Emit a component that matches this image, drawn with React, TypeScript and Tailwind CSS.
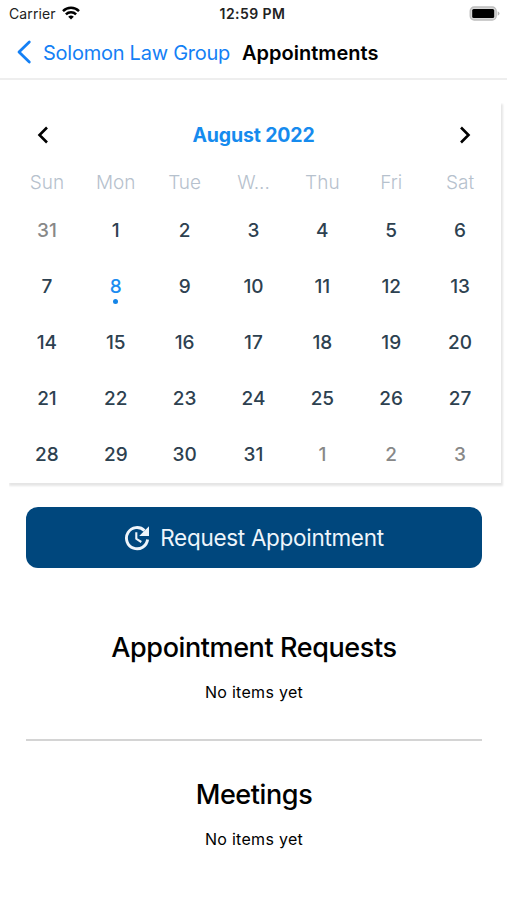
const DAY_NAMES = ["Sun", "Mon", "Tue", "W...", "Thu", "Fri", "Sat"];

const WEEKS = [
  [31, 1, 2, 3, 4, 5, 6],
  [7, 8, 9, 10, 11, 12, 13],
  [14, 15, 16, 17, 18, 19, 20],
  [21, 22, 23, 24, 25, 26, 27],
  [28, 29, 30, 31, 1, 2, 3],
];

function StatusBar() {
  return (
    <div className="grid h-[27px] grid-cols-3 items-center pl-[9px] pr-[7px] text-[14px] text-[#222]">
      <div className="flex items-center gap-1.5">
        <span className="tracking-[0.1px]">Carrier</span>
        <svg className="-mt-0.5 h-[14px] w-[18px]" viewBox="0 0 18 14" fill="none" stroke="#000" strokeWidth="2.5">
          <path d="M1 5.1a11.4 11.4 0 0 1 16 0" />
          <path d="M3.9 8.4a7.2 7.2 0 0 1 10.2 0" />
          <path d="M9 13.6 6.2 10.8a4 4 0 0 1 5.6 0z" fill="#000" stroke="none" />
        </svg>
      </div>
      <span className="-ml-1 whitespace-nowrap text-center text-[14px] font-semibold tracking-[0.45px]">12:59 PM</span>
      <svg className="-mt-px h-[15px] w-[31px] justify-self-end" viewBox="0 0 31 15">
        <rect x="1.2" y="1" width="26" height="13" rx="4" fill="#d8d8d8" stroke="#bdbdbd" strokeWidth="1.3" />
        <rect x="3.2" y="3" width="22" height="9" rx="1.5" fill="#000" />
        <path d="M28.7 5.2q1.8.8 1.8 2.3t-1.8 2.3z" fill="#b5b5b5" />
      </svg>
    </div>
  );
}

function NavBar() {
  return (
    <header className="flex h-[53px] items-center border-b-2 border-[#eeeeee] pl-[17px]">
      <svg className="-mt-0.5 h-6 w-[15px]" viewBox="0 0 15 24" fill="none" stroke="#1480f5" strokeWidth="2.8" strokeLinecap="round" strokeLinejoin="round">
        <path d="M12.3 2 2 12l10.3 10" />
      </svg>
      <span className="ml-[11px] w-[187px] whitespace-nowrap text-[20px] tracking-[-0.25px] text-[#1480f5]">Solomon Law Group</span>
      <h1 className="ml-3 text-[20px] font-semibold tracking-[0.02px] text-black">Appointments</h1>
    </header>
  );
}

function Day({ value, muted, today }: { value: number; muted: boolean; today: boolean }) {
  const color = today ? "text-[#1c8cf0]" : muted ? "text-[#888888]" : "text-[#2d4150]";
  return (
    <div className={`flex h-[56.1px] flex-col items-center text-[19px] leading-6 font-medium ${color}`}>
      <span>{value}</span>
      {today && <span className="size-[5px] rounded-full bg-[#1485e8]" />}
    </div>
  );
}

function Calendar() {
  return (
    <section className="mt-[23px] mr-[6px] ml-[9px] h-[380px] bg-white pl-[3.5px] pr-[6.5px] pt-[20px] shadow-[1px_2px_2px_1px_rgba(0,0,0,0.1)] [clip-path:inset(0_-6px_-6px_0)]">
      <div className="flex h-[25px] items-center justify-between px-[23px]">
        <svg className="-mt-0.5 h-5 w-[14px]" viewBox="0 0 14 20" fill="none" stroke="#000" strokeWidth="2.6">
          <path d="M11 2.5 3.5 10l7.5 7.5" />
        </svg>
        <h2 className="text-[19.5px] font-bold tracking-[-0.15px] text-[#168bee]">August 2022</h2>
        <svg className="-mt-0.5 h-5 w-[14px]" viewBox="0 0 14 20" fill="none" stroke="#000" strokeWidth="2.6">
          <path d="M3 2.5 10.5 10 3 17.5" />
        </svg>
      </div>
      <div className="mt-[23px] grid grid-cols-7 text-center text-[19px] leading-6 font-light text-[#b6c1cd]">
        {DAY_NAMES.map((name) => (
          <span key={name}>{name}</span>
        ))}
      </div>
      <div className="mt-[24px] grid grid-cols-7">
        {WEEKS.map((week, row) =>
          week.map((value, col) => (
            <Day
              key={`${row}-${col}`}
              value={value}
              muted={(row === 0 && value > 7) || (row === 4 && value < 7)}
              today={row === 1 && value === 8}
            />
          )),
        )}
      </div>
    </section>
  );
}

function RequestIcon() {
  return (
    <svg className="size-[26px]" viewBox="0 0 26 26" fill="none" stroke="#eef5fb">
      <path d="M20.5 5.6A10.6 10.6 0 1 0 23.6 14.5" strokeWidth="2.9" />
      <path d="M25 1.2V11H15.2z" fill="#eef5fb" stroke="none" />
      <path d="M12.3 7.2v6.6l5 3.2" strokeWidth="2.1" />
    </svg>
  );
}

function EmptyList({ title }: { title: string }) {
  return (
    <section className="text-center text-black">
      <h2 className="text-[27px] leading-8 font-medium tracking-[-0.4px]">{title}</h2>
      <p className="mt-[16px] text-[16px] leading-6 tracking-[0.3px]">No items yet</p>
    </section>
  );
}

export default function App() {
  return (
    <div className="h-[900px] w-full overflow-hidden bg-white font-['Inter','Liberation_Sans',sans-serif]">
      <StatusBar />
      <NavBar />
      <Calendar />
      <main className="mt-[24px] pl-[26px] pr-[25px]">
        <button className="flex h-[61px] w-full items-center justify-center gap-[10px] rounded-[12px] bg-[#00477d] text-[22.5px] text-[#eef5fb]">
          <RequestIcon />
          <span className="tracking-[-0.3px]">Request Appointment</span>
        </button>
        <div className="mt-[64px]">
          <EmptyList title="Appointment Requests" />
        </div>
        <hr className="mt-[35px] mb-[38px] border-t-2 border-[#d4d4d4]" />
        <EmptyList title="Meetings" />
      </main>
    </div>
  );
}
